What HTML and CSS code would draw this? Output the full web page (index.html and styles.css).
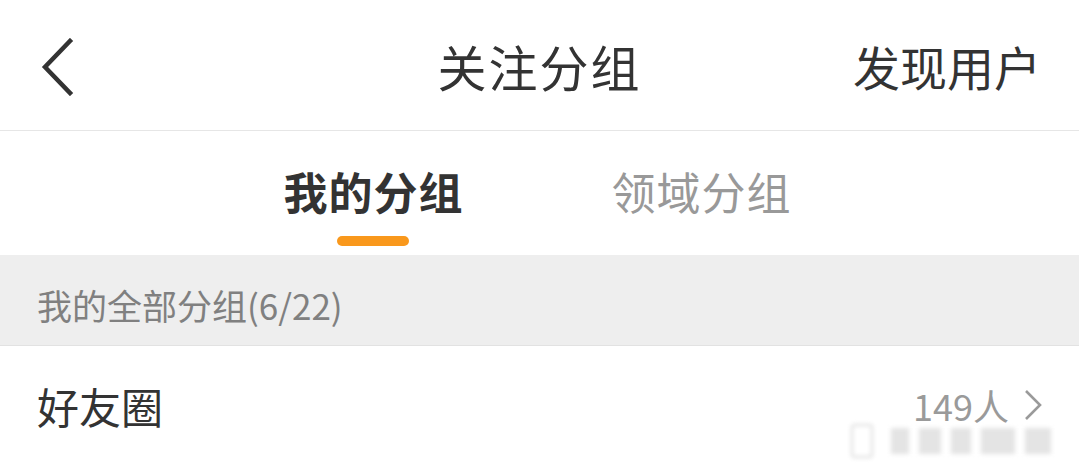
FILE: index.html
```html
<!DOCTYPE html>
<html lang="zh-CN">
<head>
  <meta charset="UTF-8">
  <title>关注分组</title>
  <meta name="viewport" content="width=device-width, initial-scale=1.0">
  <link rel="stylesheet" href="styles.css">
</head>
<body>
  <div class="page">
    <div class="nav-bar">
      <button class="back-btn" aria-label="返回">
        <svg width="34" height="58" viewBox="0 0 34 58">
          <polyline points="30,3 5,29 30,55" fill="none" stroke="#333" stroke-width="4.5" stroke-linecap="square"/>
        </svg>
      </button>
      <div class="nav-title">关注分组</div>
      <div class="nav-action">发现用户</div>
    </div>
    <div class="tabs">
      <div class="tab active">我的分组<span class="tab-line"></span></div>
      <div class="tab">领域分组</div>
    </div>
    <div class="section-head">我的全部分组(6/22)</div>
    <div class="group-row">
      <span class="group-name">好友圈</span>
      <span class="group-count">149人
        <svg width="20" height="34" viewBox="0 0 20 34">
          <polyline points="3,3 17,17 3,31" fill="none" stroke="#9a9a9a" stroke-width="2.6"/>
        </svg>
      </span>
    </div>
    <div class="watermark" aria-hidden="true">
      <span class="wm-mark"></span>
      <span class="wm-block w1"></span>
      <span class="wm-block w2"></span>
      <span class="wm-block w3"></span>
      <span class="wm-block w4"></span>
      <span class="wm-block w5"></span>
    </div>
  </div>
</body>
</html>
```

FILE: styles.css
```css
body {
  margin: 0;
  background: #fff;
  font-family: "Noto Sans CJK SC", "Noto Sans", sans-serif;
  color: #333;
}
.page {
  position: relative;
  width: 1079px;
  height: 470px;
  overflow: hidden;
}
.nav-bar {
  height: 130px;
  display: grid;
  grid-template-columns: 1fr auto 1fr;
  align-items: center;
  border-bottom: 1px solid #e6e6e6;
}
.back-btn {
  justify-self: start;
  background: none;
  border: none;
  padding: 0;
  margin-left: 40px;
  margin-top: 3px;
  display: flex;
}
.nav-title {
  font-size: 49px;
  letter-spacing: 2px;
  color: #333;
}
.nav-action {
  justify-self: end;
  margin-right: 38px;
  font-size: 47px;
  color: #333;
}
.tabs {
  height: 124px;
  display: flex;
  justify-content: center;
  gap: 148px;
  padding-right: 4px;
}
.tab {
  position: relative;
  font-size: 44px;
  color: #999;
  padding-top: 28px;
  letter-spacing: 1px;
}
.tab.active {
  color: #333;
  font-weight: bold;
}
.tab-line {
  position: absolute;
  left: 50%;
  top: 105px;
  width: 72px;
  height: 10px;
  margin-left: -37px;
  border-radius: 5px;
  background: #f9981c;
}
.section-head {
  height: 90px;
  background: #eeeeee;
  border-bottom: 1px solid #e2e2e2;
  padding-left: 37px;
  padding-top: 8px;
  display: flex;
  align-items: center;
  font-size: 35px;
  color: #808080;
  box-sizing: border-box;
  height: 91px;
}
.group-row {
  height: 120px;
  display: flex;
  justify-content: space-between;
  align-items: center;
  padding: 0 36px 0 37px;
  margin-top: -1px;
}
.group-name {
  font-size: 42px;
  color: #333;
}
.group-count {
  display: flex;
  align-items: center;
  gap: 14px;
  font-size: 36px;
  color: #9a9a9a;
}
.watermark {
  position: absolute;
  right: 28px;
  bottom: 12px;
  display: flex;
  align-items: center;
  gap: 10px;
  filter: blur(2px);
}
.wm-mark {
  width: 18px;
  height: 30px;
  border: 2px solid #dcdcdc;
  border-radius: 4px;
  margin-right: 8px;
}
.wm-block {
  height: 26px;
  background: #e4e4e4;
}
.w1 { width: 18px; }
.w2 { width: 22px; }
.w3 { width: 20px; }
.w4 { width: 34px; }
.w5 { width: 26px; }
```
